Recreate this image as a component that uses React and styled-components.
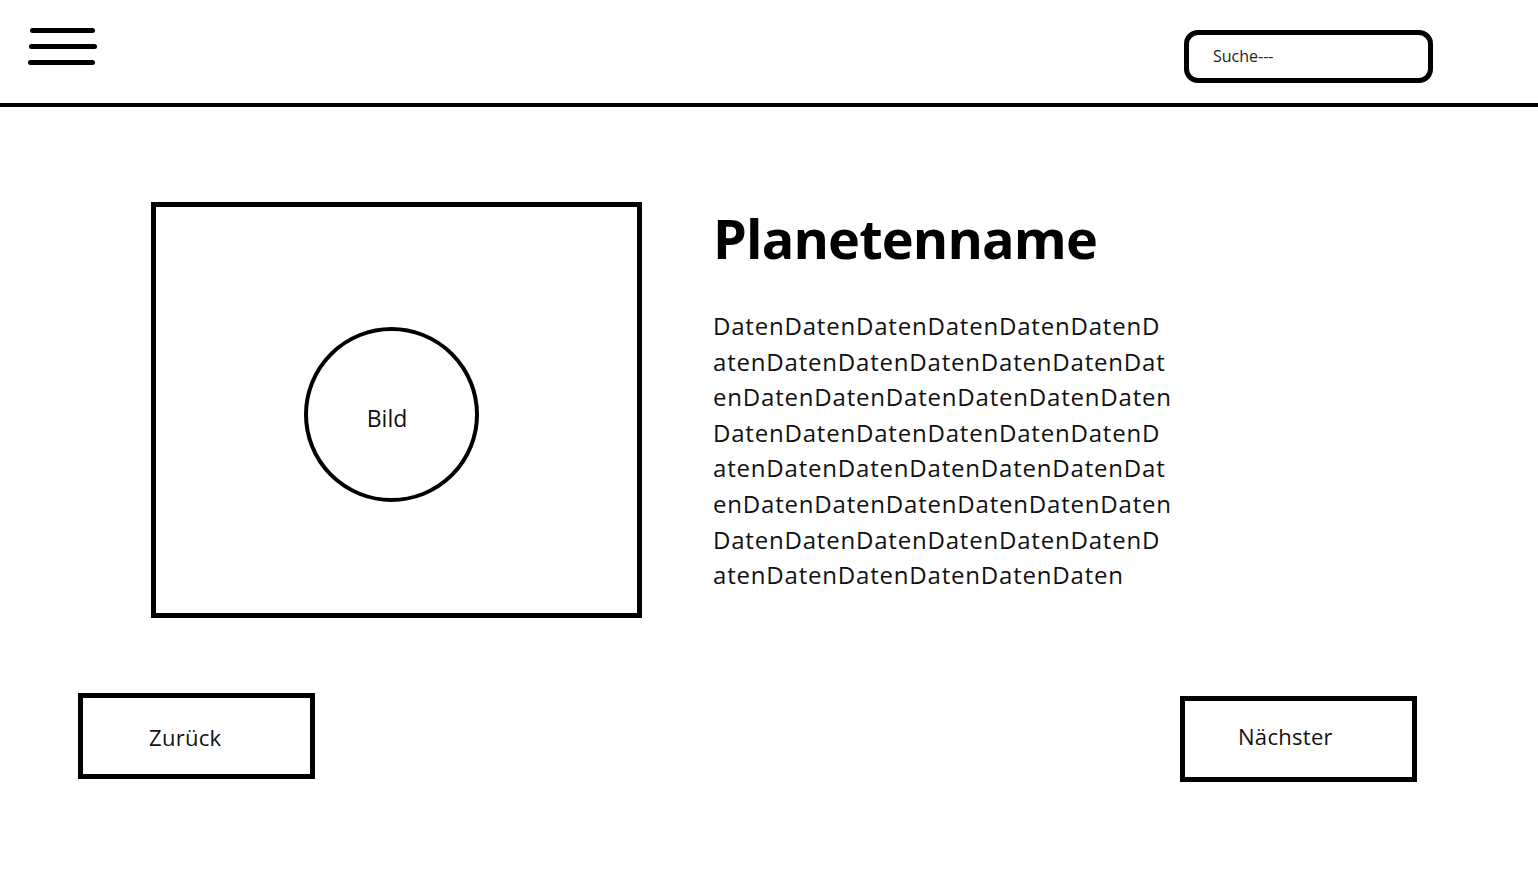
import React from 'react';
import styled, { createGlobalStyle } from 'styled-components';

const GlobalStyle = createGlobalStyle`
  html, body {
    margin: 0;
    padding: 0;
    background: #fff;
  }
  body {
    font-family: "Open Sans", "Noto Sans", sans-serif;
    color: #111;
  }
`;

const Page = styled.div`
  width: 1538px;
  min-height: 895px;
  background: #fff;
`;

const Header = styled.header`
  display: flex;
  justify-content: space-between;
  align-items: flex-start;
  box-sizing: border-box;
  height: 107px;
  padding: 28px 105px 0 28px;
  border-bottom: 4px solid #000;
`;

const MenuButton = styled.button`
  display: flex;
  flex-direction: column;
  gap: 11px;
  padding: 0;
  border: none;
  background: none;
  cursor: pointer;
`;

const MenuLine = styled.span`
  display: block;
  width: ${p => p.$width}px;
  height: 5px;
  margin-left: ${p => p.$indent}px;
  border-radius: 3px;
  background: #000;
`;

const SearchBox = styled.div`
  display: flex;
  align-items: center;
  box-sizing: border-box;
  width: 249px;
  height: 53px;
  margin-top: 2px;
  padding: 0 0 2px 24px;
  border: 5px solid #000;
  border-radius: 14px;
`;

const SearchInput = styled.input`
  width: 100%;
  padding: 0;
  border: none;
  outline: none;
  background: transparent;
  font-family: "Open Sans", sans-serif;
  font-size: 16px;
  color: #222;

  &::placeholder {
    color: #222;
  }
`;

const Main = styled.main`
  display: flex;
  align-items: flex-start;
  gap: 71px;
  padding: 95px 0 0 151px;
`;

const ImageFrame = styled.div`
  display: flex;
  align-items: center;
  justify-content: center;
  box-sizing: border-box;
  width: 491px;
  height: 416px;
  border: 5px solid #000;
`;

const Circle = styled.div`
  display: flex;
  align-items: center;
  justify-content: center;
  box-sizing: border-box;
  width: 175px;
  height: 175px;
  margin: 9px 10px 0 0;
  border: 4px solid #000;
  border-radius: 50%;
`;

const CircleLabel = styled.span`
  margin: 7px 9px 0 0;
  font-size: 23px;
  color: #111;
`;

const Info = styled.section`
  padding-top: 9px;
`;

const Title = styled.h1`
  margin: 0 0 42px;
  font-family: "Open Sans", sans-serif;
  font-size: 54px;
  font-weight: 700;
  line-height: 55px;
  letter-spacing: -0.85px;
  color: #000;
`;

const DataText = styled.div`
  font-size: 24px;
  line-height: 35.6px;
  letter-spacing: 0.8px;
  color: #111;
`;

const DataLine = styled.div`
  white-space: nowrap;
`;

const Footer = styled.footer`
  display: flex;
  justify-content: space-between;
  align-items: flex-start;
  padding: 75px 121px 0 78px;
`;

const NavButton = styled.button`
  display: flex;
  align-items: center;
  box-sizing: border-box;
  width: 237px;
  height: 86px;
  margin-top: ${p => p.$shift || 0}px;
  padding: ${p => p.$padTop}px 0 ${p => p.$padBottom}px ${p => p.$indent}px;
  border: 5px solid #000;
  background: #fff;
  font-family: "Open Sans", sans-serif;
  font-size: 22px;
  letter-spacing: 0.3px;
  color: #111;
  cursor: pointer;
`;

const dataLines = [
  'DatenDatenDatenDatenDatenDatenD',
  'atenDatenDatenDatenDatenDatenDat',
  'enDatenDatenDatenDatenDatenDaten',
  'DatenDatenDatenDatenDatenDatenD',
  'atenDatenDatenDatenDatenDatenDat',
  'enDatenDatenDatenDatenDatenDaten',
  'DatenDatenDatenDatenDatenDatenD',
  'atenDatenDatenDatenDatenDaten',
];

export default function App() {
  return (
    <Page>
      <GlobalStyle />
      <Header>
        <MenuButton aria-label="Menü">
          <MenuLine $width={65} $indent={2} />
          <MenuLine $width={68} $indent={1} />
          <MenuLine $width={67} $indent={0} />
        </MenuButton>
        <SearchBox>
          <SearchInput placeholder="Suche---" />
        </SearchBox>
      </Header>

      <Main>
        <ImageFrame>
          <Circle>
            <CircleLabel>Bild</CircleLabel>
          </Circle>
        </ImageFrame>
        <Info>
          <Title>Planetenname</Title>
          <DataText>
            {dataLines.map((line, i) => (
              <DataLine key={`line_${i}`}>{line}</DataLine>
            ))}
          </DataText>
        </Info>
      </Main>

      <Footer>
        <NavButton $indent={66} $padTop={2} $padBottom={0}>Zurück</NavButton>
        <NavButton $indent={53} $shift={3} $padTop={0} $padBottom={6}>Nächster</NavButton>
      </Footer>
    </Page>
  );
}
